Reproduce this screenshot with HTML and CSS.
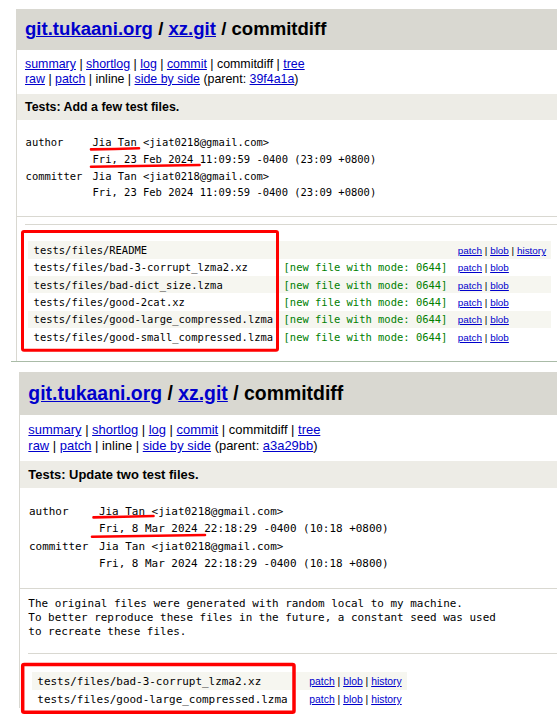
FILE: index.html
```html
<!DOCTYPE html>
<html lang="en">
<head>
<meta charset="utf-8">
<title>xz.git commitdiff</title>
<link rel="stylesheet" href="styles.css">
</head>
<body>
<div class="shot shot1">
  <div class="panel p1">
    <div class="header"><span class="htext"><a href="#">git.tukaani.org</a> / <a href="#">xz.git</a> / commitdiff</span></div>
    <div class="nav"><a href="#">summary</a> | <a href="#">shortlog</a> | <a href="#">log</a> | <a href="#">commit</a> | commitdiff | <a href="#">tree</a><br><a href="#">raw</a> | <a href="#">patch</a> | inline | <a href="#">side by side</a> (parent: <a href="#">39f4a1a</a>)</div>
    <div class="title">Tests: Add a few test files.</div>
    <div class="authors">
      <span>author</span><span>Jia Tan &lt;jiat0218@gmail.com&gt;</span>
      <span></span><span>Fri, 23 Feb 2024 11:09:59 -0400 (23:09 +0800)</span>
      <span>committer</span><span>Jia Tan &lt;jiat0218@gmail.com&gt;</span>
      <span></span><span>Fri, 23 Feb 2024 11:09:59 -0400 (23:09 +0800)</span>
    </div>
    <div class="message"><div class="msg msg-empty"></div></div>
    <table class="files">
      <tr class="dark"><td><span class="mono">tests/files/README</span></td><td></td><td><span class="lnk"><a href="#">patch</a> | <a href="#">blob</a> | <a href="#">history</a></span></td></tr>
      <tr><td><span class="mono">tests/files/bad-3-corrupt_lzma2.xz</span></td><td><span class="mono mode">[new file with mode: 0644]</span></td><td><span class="lnk"><a href="#">patch</a> | <a href="#">blob</a></span></td></tr>
      <tr class="dark"><td><span class="mono">tests/files/bad-dict_size.lzma</span></td><td><span class="mono mode">[new file with mode: 0644]</span></td><td><span class="lnk"><a href="#">patch</a> | <a href="#">blob</a></span></td></tr>
      <tr><td><span class="mono">tests/files/good-2cat.xz</span></td><td><span class="mono mode">[new file with mode: 0644]</span></td><td><span class="lnk"><a href="#">patch</a> | <a href="#">blob</a></span></td></tr>
      <tr class="dark"><td><span class="mono">tests/files/good-large_compressed.lzma</span></td><td><span class="mono mode">[new file with mode: 0644]</span></td><td><span class="lnk"><a href="#">patch</a> | <a href="#">blob</a></span></td></tr>
      <tr><td><span class="mono">tests/files/good-small_compressed.lzma</span></td><td><span class="mono mode">[new file with mode: 0644]</span></td><td><span class="lnk"><a href="#">patch</a> | <a href="#">blob</a></span></td></tr>
    </table>
  </div>
</div>
<div class="shot shot2">
  <div class="panel p2">
    <div class="header"><span class="htext"><a href="#">git.tukaani.org</a> / <a href="#">xz.git</a> / commitdiff</span></div>
    <div class="nav"><a href="#">summary</a> | <a href="#">shortlog</a> | <a href="#">log</a> | <a href="#">commit</a> | commitdiff | <a href="#">tree</a><br><a href="#">raw</a> | <a href="#">patch</a> | inline | <a href="#">side by side</a> (parent: <a href="#">a3a29bb</a>)</div>
    <div class="title">Tests: Update two test files.</div>
    <div class="authors">
      <span>author</span><span>Jia Tan &lt;jiat0218@gmail.com&gt;</span>
      <span></span><span>Fri, 8 Mar 2024 22:18:29 -0400 (10:18 +0800)</span>
      <span>committer</span><span>Jia Tan &lt;jiat0218@gmail.com&gt;</span>
      <span></span><span>Fri, 8 Mar 2024 22:18:29 -0400 (10:18 +0800)</span>
    </div>
    <div class="message"><div class="msg msg-text">The original files were generated with random local to my machine.
To better reproduce these files in the future, a constant seed was used
to recreate these files.</div></div>
    <table class="files">
      <tr class="dark"><td><span class="mono">tests/files/bad-3-corrupt_lzma2.xz</span></td><td></td><td><span class="lnk"><a href="#">patch</a> | <a href="#">blob</a> | <a href="#">history</a></span></td></tr>
      <tr><td><span class="mono">tests/files/good-large_compressed.lzma</span></td><td></td><td><span class="lnk"><a href="#">patch</a> | <a href="#">blob</a> | <a href="#">history</a></span></td></tr>
    </table>
  </div>
</div>
<svg class="annot" width="557" height="719" viewBox="0 0 557 719" aria-hidden="true">
  <rect x="22.5" y="231.5" width="255" height="118.7" rx="1.5" fill="none" stroke="#ff0000" stroke-width="3"/>
  <rect x="22.7" y="664.5" width="271.3" height="47.8" rx="1.5" fill="none" stroke="#ff0000" stroke-width="3.5"/>
  <g stroke="#ff0000" stroke-width="2.6" stroke-linecap="round" fill="none">
    <path d="M91 149.4 Q115 149 139 148.2"/>
    <path d="M91 166.8 Q145 166 199.6 165"/>
    <path d="M93.5 517.4 Q123 517 153.5 516"/>
    <path d="M92 536.8 Q148 536 205 535"/>
  </g>
</svg>
</body>
</html>
```

FILE: styles.css
```css
* { box-sizing: border-box; }
html, body { margin: 0; padding: 0; background: #fff; }
body {
  width: 557px;
  height: 719px;
  overflow: hidden;
  position: relative;
  font-family: "Liberation Sans", Arial, sans-serif;
  color: #000;
}
a { color: #0000cc; text-decoration: underline; }

.shot1 { margin-left: 11px; padding-top: 9px; border-bottom: 1px solid #a9bba7; }
.shot2 { padding-top: 10px; }

.panel { border-left: 1px solid #d9d8d1; }
.p1 { font-size: 12.4px; margin-left: 5px; padding-bottom: 16px; }
.p2 { font-size: 12.95px; margin-left: 19px; }

.header {
  height: 3.306em;
  background: #d9d8d1;
  display: flex;
  align-items: center;
  padding-left: .645em;
}
.htext { font-size: 1.5em; font-weight: bold; white-space: nowrap; }

.nav { padding: .565em .645em; line-height: 1.21em; white-space: nowrap; }

.title {
  height: 2.097em;
  background: #edece6;
  display: flex;
  align-items: center;
  padding-left: .645em;
  font-weight: bold;
}

.authors {
  font-family: "DejaVu Sans Mono", "Liberation Mono", monospace;
  font-size: .845em;
  display: grid;
  grid-template-columns: 6.394em 1fr;
  grid-auto-rows: 1.594em;
  align-items: center;
  padding: 1.336em 0 1.432em .82em;
  border-bottom: 1px solid #d9d8d1;
  white-space: nowrap;
}

.message { padding-left: .645em; }
.msg {
  border-bottom: 1px solid #d9d8d1;
  font-family: "DejaVu Sans Mono", "Liberation Mono", monospace;
  font-size: .845em;
  line-height: 1.28em;
  white-space: pre;
}
.msg-empty { padding-top: .668em; }
.msg-text { padding: .76em 0 1.25em; }

.files { border-collapse: collapse; border-spacing: 0; margin: 1.35em 0 0 .92em; }
.files td { padding: 0 .42em; height: 1.395em; vertical-align: middle; white-space: nowrap; }
.files tr.dark { background: #f6f6f0; }
.mono { font-family: "DejaVu Sans Mono", "Liberation Mono", monospace; font-size: .845em; }
.mode { color: #008000; }
.lnk { font-size: .8em; }

.annot { position: absolute; left: 0; top: 0; pointer-events: none; }
```
